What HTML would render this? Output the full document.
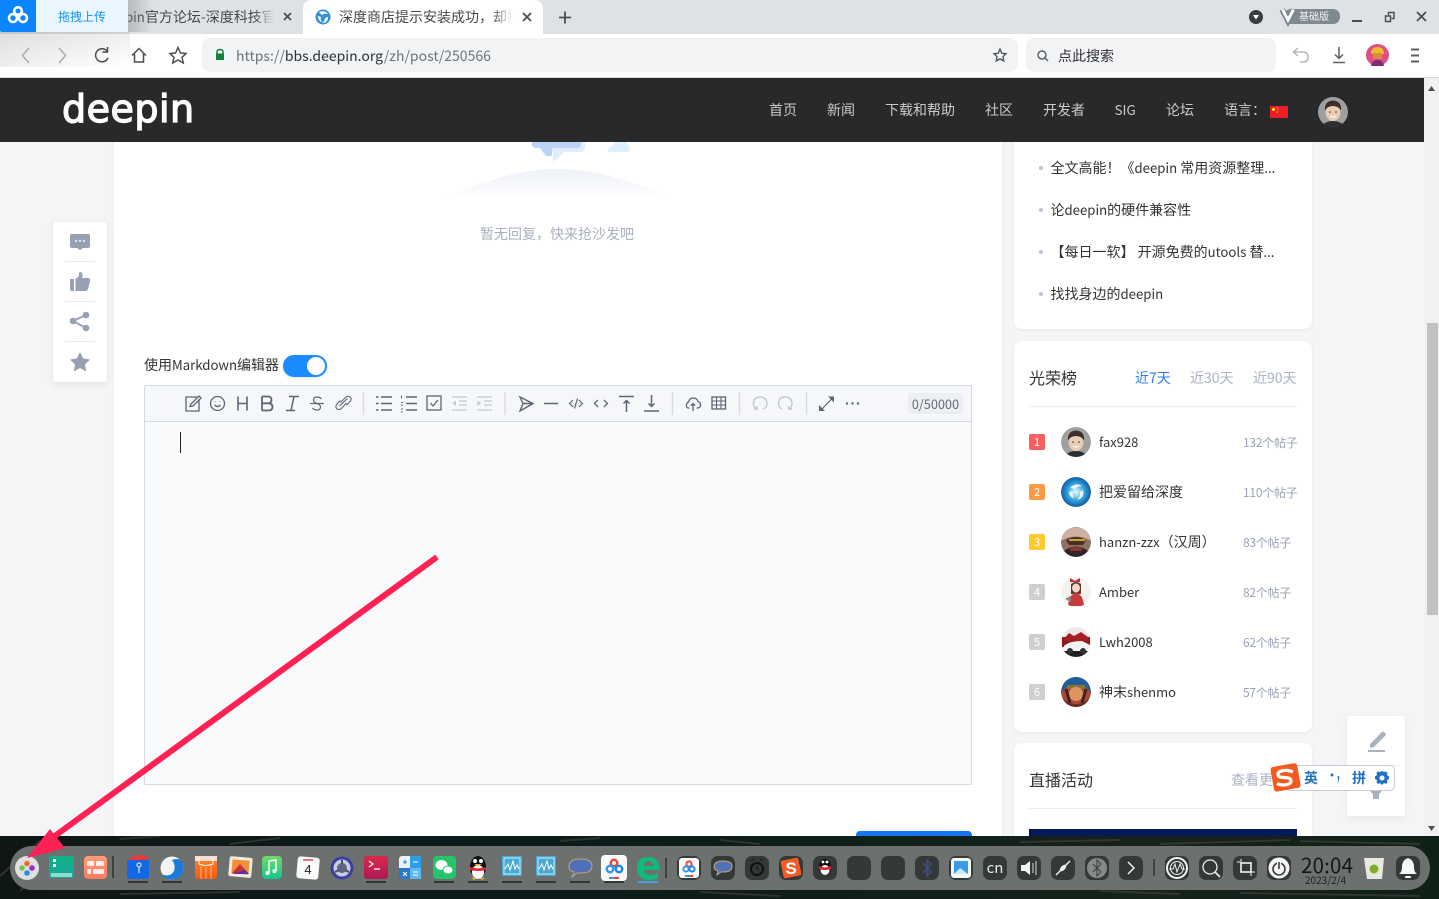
<!DOCTYPE html>
<html lang="zh"><head><meta charset="utf-8"><title>deepin</title>
<style>
*{box-sizing:border-box}
html,body{margin:0;padding:0;width:1439px;height:899px;overflow:hidden;background:#f4f5f7;font-family:"Noto Sans CJK SC","Liberation Sans",sans-serif;color:#333}
.a,.t{position:absolute}
.t{white-space:nowrap;line-height:20px;font-size:14px}
.l{font-size:13.2px}
.nav{color:#c9cacb}
.gray{color:#9aa3b4;font-size:12px;letter-spacing:-.25px}
.b{left:1029px;width:16px;height:16px;border-radius:2px;color:#fff;font-size:11px;line-height:16px;text-align:center}
.av{left:1061px;width:30px;height:30px;border-radius:50%}
.card{background:#fff;border-radius:8px;box-shadow:0 1px 4px rgba(0,0,0,.06)}
.dot{left:1039px;width:4px;height:4px;border-radius:50%;background:#bcc4d2}
</style></head><body>

<!-- page -->
<div class="a" style="left:114px;top:142px;width:888px;height:700px;background:#fff;box-shadow:0 0 3px rgba(0,0,0,.06)"></div>
<div class="a card" style="left:1014px;top:130px;width:298px;height:199px"></div>
<div class="a card" style="left:1014px;top:341px;width:298px;height:391px"></div>
<div class="a card" style="left:1014px;top:743px;width:298px;height:110px"></div>
<div class="a" style="left:1029px;top:829px;width:268px;height:8px;background:#061a5a"></div>

<!-- empty state -->
<svg class="a" style="left:440px;top:142px" width="240" height="60" viewBox="0 0 240 60">
<defs><linearGradient id="h" x1="0" y1="0" x2="0" y2="1"><stop offset="0" stop-color="#eef1f7"/><stop offset="1" stop-color="#fff"/></linearGradient></defs>
<path d="M0 57C50 36 85 27 118 27C150 27 195 38 232 57Z" fill="url(#h)"/>
<path d="M110 0H145V6Q145 10 140 10H124L113 20V10H110Z" fill="#dfeefe"/>
<path d="M92 0H141V3Q141 6 136 6H112V14H106L100 6H97Q92 6 92 3Z" fill="#bcd3f7"/>
<path d="M168 10Q167 5 172 4Q174 0 176 0H186Q190 4 190 8Q190 10 187 10Z" fill="#dff0fd"/>
</svg>
<div class="t" style="left:480px;top:224px;color:#a9b0bc">暂无回复，快来抢沙发吧</div>

<!-- left float -->
<div class="a card" style="left:53px;top:222px;width:54px;height:160px;border-radius:3px;box-shadow:0 2px 8px rgba(0,0,0,.09)"></div>
<div class="a" style="left:65px;top:261px;width:30px;height:1px;background:#eaecef"></div>
<div class="a" style="left:65px;top:301px;width:30px;height:1px;background:#eaecef"></div>
<div class="a" style="left:65px;top:341px;width:30px;height:1px;background:#eaecef"></div>
<svg class="a" style="left:53px;top:222px" width="54" height="160" viewBox="0 0 54 160" fill="#98a1b3">
<path d="M19 12Q17 12 17 14V24Q17 26 19 26H24.500L27 28.500L29.500 26H35Q37 26 37 24V14Q37 12 35 12Z"/>
<g fill="#fff"><circle cx="23" cy="19" r="1"/><circle cx="27" cy="19" r="1"/><circle cx="31" cy="19" r="1"/></g>
<path d="M17 57H21V69H19Q17 69 17 67ZM22.500 57L26 54V51Q27 49 29 51Q30 53 29 56H35Q37.500 56 37 59L35 67Q34.500 69 32 69H22.500Z"/>
<circle cx="33" cy="93" r="3.300"/><circle cx="20" cy="99" r="3.300"/><circle cx="33" cy="106" r="3.300"/>
<path d="M33 93L20 99L33 106" fill="none" stroke="#98a1b3" stroke-width="2"/>
<path d="M27 130L30.200 136.500L37 137.500L32 142.500L33.300 149.500L27 146L20.700 149.500L22 142.500L17 137.500L23.800 136.500Z"/>
</svg>

<!-- editor -->
<div class="t" style="left:144px;top:355px;color:#333">使用<span class="l">Markdown</span>编辑器</div>
<div class="a" style="left:283px;top:355px;width:44px;height:22px;border-radius:11px;background:#1a8cff;box-shadow:0 1px 3px rgba(0,0,0,.12)"></div>
<div class="a" style="left:307px;top:357px;width:18px;height:18px;border-radius:50%;background:#fff"></div>
<div class="a" style="left:144px;top:385px;width:828px;height:400px;background:#f9fafc;border:1px solid #d5d9e0;border-radius:2px"></div>
<div class="a" style="left:145px;top:386px;width:826px;height:36px;background:#f6f7fa;border-bottom:1px solid #d5d9e0"></div>
<div class="a" style="left:180px;top:432px;width:1px;height:21px;background:#222"></div>
<div class="a" style="left:908px;top:393px;width:55px;height:21px;border-radius:3px;background:#eceef1;color:#626a76;font-size:12.500px;line-height:21px;text-align:center;letter-spacing:.1px">0/50000</div>

<svg class="a" style="left:145px;top:386px" width="826" height="36" viewBox="0 0 826 36" fill="none" stroke="#5d6673" stroke-width="1.300">
<path d="M52 11H41V25H54V14M45 20.500L46 18L54 10L56 12L48 20Z"/>
<circle cx="72.500" cy="17.500" r="7"/><path d="M69.500 19Q72.500 22 75.500 19M70 15V15.500M75 15V15.500"/>
<path d="M93 10.500V24.500M102 10.500V24.500M93 17.500H102" stroke-width="1.600"/>
<path d="M117 10.500V24.500M117 10.500H123Q126.500 10.500 126.500 14Q126.500 17.300 123 17.300H117M123 17.300Q127.500 17.300 127.500 21Q127.500 24.500 123 24.500H117" stroke-width="1.800"/>
<path d="M144 10.500H154M141 24.500H150M149 10.500L146 24.500" stroke-width="1.500"/>
<path d="M165 17.500H179" stroke-width="1.200"/><path d="M176.500 13Q175 11 172 11Q168.500 11 168.500 14Q168.500 16.500 172 17.500Q175.500 18.500 175.500 21Q175.500 24 172 24Q169 24 167.500 22" stroke-width="1.200"/>
<path d="M195.500 16.500L200.500 11.500Q202.500 9.500 205 11Q207 13 205.500 15L201.500 19M201.500 17L196.500 22.500Q194.500 24.500 192 23Q190 21 191.500 18.500L195.500 14.500M194.500 20L202.500 12.500" stroke-width="1.100" transform="translate(0 0)"/>
<path d="M218.500 6V29" stroke="#d8dbe0"/>
<path d="M236 11H247M236 17.500H247M236 24H247" stroke-width="1.600"/><path d="M231 11H233.500M231 17.500H233.500M231 24H233.500" stroke-width="1.600"/>
<path d="M261 11H272M261 17.500H272M261 24H272" stroke-width="1.600"/><path d="M256.500 9.500V12.500M256 16.500H258M256 19H258M256 23H258M256 26H258" stroke-width="1"/>
<rect x="282" y="10" width="14" height="14"/><path d="M285.500 17L288 20L293 14"/>
<path d="M307 11H322M314 15H322M314 19H322M307 24H322" stroke="#c3c7ce"/><path d="M311 14.500V20L307.500 17.200Z" fill="#c3c7ce" stroke="none"/>
<path d="M332 11H347M339 15H347M339 19H347M332 24H347" stroke="#c3c7ce"/><path d="M332.500 14.500V20L336 17.200Z" fill="#c3c7ce" stroke="none"/>
<path d="M360 6V29" stroke="#d8dbe0"/>
<path d="M375 11L388 17.500L375 25L378 17.500ZM378 17.500H388" stroke-width="1.400"/>
<path d="M399 17.500H413" stroke-width="1.500"/>
<path d="M428 14L424.500 17.500L428 21M434 14L437.500 17.500L434 21M432.500 12.500L429.500 22.500" stroke-width="1.200"/>
<path d="M453 14L449.500 17.500L453 21M459 14L462.500 17.500L459 21" stroke-width="1.300"/>
<path d="M474 10.500H489M481.500 26V15M478.500 17.500L481.500 14.500L484.500 17.500" stroke-width="1.500"/>
<path d="M499 25H514M506.500 9V20M503.500 17.500L506.500 20.500L509.500 17.500" stroke-width="1.500"/>
<path d="M527.500 6V29" stroke="#d8dbe0"/>
<path d="M544.500 22H543Q541 21.500 541.500 18.500Q542 16.500 543.500 16Q544.500 12 548 12Q552 12 553 15.500Q555.500 16 555.500 18.500Q555.500 21.500 553 22H551.500M548 25V17.500M545.800 19.700L548 17.500L550.200 19.700"/>
<rect x="567" y="11" width="13.500" height="12"/><path d="M567 15H580.500M567 19H580.500M571.500 11V23M576 11V23" stroke-width="1.100"/>
<path d="M594.500 6V29" stroke="#d8dbe0"/>
<path d="M612 23Q608 21 608.500 16.500Q609.500 11 615 11Q621 11 622 16.500Q622.500 21 618.500 23M609 23H612V20" stroke="#c5c8ce" stroke-width="1.400"/>
<path d="M637 23Q633 21 633.500 16.500Q634.500 11 640 11Q646 11 647 16.500Q647.500 21 643.500 23M647 23H643.500V20" stroke="#c5c8ce" stroke-width="1.400"/>
<path d="M661.500 6V29" stroke="#d8dbe0"/>
<path d="M677 23L687 12.500" stroke-width="1.100"/><path d="M683 10.500H689V16.500ZM680 25H674V19Z" fill="#5d6673" stroke="none"/>
<g fill="#5d6673" stroke="none"><circle cx="702" cy="17.500" r="1.200"/><circle cx="707.500" cy="17.500" r="1.200"/><circle cx="713" cy="17.500" r="1.200"/></g>
</svg>

<!-- submit button edge -->
<div class="a" style="left:856px;top:831px;width:116px;height:8px;background:#1476f0;border-radius:4px 4px 0 0"></div>

<!-- right list -->
<div class="a dot" style="top:166px"></div><div class="t" style="left:1050.500px;top:158px">全文高能！《<span class="l">deepin</span> 常用资源整理<span class="l">...</span></div>
<div class="a dot" style="top:208px"></div><div class="t" style="left:1050.500px;top:200px">论<span class="l">deepin</span>的硬件兼容性</div>
<div class="a dot" style="top:250px"></div><div class="t" style="left:1050.500px;top:242px">【每日一软】 开源免费的<span class="l">utools</span> 替<span class="l">...</span></div>
<div class="a dot" style="top:292px"></div><div class="t" style="left:1050.500px;top:284px">找找身边的<span class="l">deepin</span></div>

<div class="t" style="left:1029px;top:367px;font-size:16px;line-height:21px;color:#333">光荣榜</div>
<div class="t" style="left:1135px;top:368px;color:#2b7ef0">近7天</div>
<div class="t" style="left:1190px;top:368px;color:#a9b3c4">近30天</div>
<div class="t" style="left:1253px;top:368px;color:#a9b3c4">近90天</div>
<div class="a" style="left:1029px;top:406px;width:268px;height:1px;background:#eceef1"></div>

<div class="a b" style="top:434px;background:#f85f5f">1</div>
<div class="a b" style="top:484px;background:#fb9b45">2</div>
<div class="a b" style="top:534px;background:#fdca2e">3</div>
<div class="a b" style="top:584px;background:#cfcfcf">4</div>
<div class="a b" style="top:634px;background:#cfcfcf">5</div>
<div class="a b" style="top:684px;background:#cfcfcf">6</div>

<svg class="a av" style="top:427px" width="30" height="30" viewBox="0 0 30 30"><circle cx="15" cy="15" r="15" fill="#a0a0a0"/><ellipse cx="15" cy="15" rx="7.500" ry="9" fill="#e9cdb4"/><path d="M7 14Q6 4 15 3.500Q24 4 23 14Q21 9 15 9Q9 9 7 14Z" fill="#3a2f2a"/><path d="M5 28Q8 24 15 24Q22 24 25 28Q20 30 15 30Q10 30 5 28Z" fill="#2f2f2f"/><path d="M12 19Q15 21 18 19" stroke="#fff" fill="none"/><circle cx="12" cy="15" r=".8" fill="#333"/><circle cx="18" cy="15" r=".8" fill="#333"/></svg>
<svg class="a av" style="top:477px" width="30" height="30" viewBox="0 0 30 30"><defs><radialGradient id="d"><stop offset=".1" stop-color="#cdeefa"/><stop offset=".55" stop-color="#36a6db"/><stop offset="1" stop-color="#0d5ba8"/></radialGradient></defs><circle cx="15" cy="15" r="15" fill="url(#d)"/><path d="M9 11Q15 5 21 9Q16 9 14 12ZM22 13Q24 21 16 23Q20 19 19 15ZM8 15Q8 20 13 21Q11 17 12 14Z" fill="#e9f7fc"/></svg>
<svg class="a av" style="top:527px" width="30" height="30" viewBox="0 0 30 30"><circle cx="15" cy="15" r="15" fill="#8d7263"/><path d="M0 14Q15 5 30 14V4Q15-3 0 4Z" fill="#cdb0a0"/><path d="M5 13Q15 7 25 13L22 18H8Z" fill="#4a2f26"/><path d="M8 12H24V14H8Z" fill="#c3a53a"/><path d="M3 24Q15 15 27 24Q22 30 15 30Q8 30 3 24Z" fill="#33242a"/><path d="M9 20H21V24H9Z" fill="#8a3530"/></svg>
<svg class="a av" style="top:577px" width="30" height="30" viewBox="0 0 30 30"><circle cx="15" cy="15" r="15" fill="#f4f1ee"/><path d="M9 1L14 4L19 1V5H9Z" fill="#c4313b"/><path d="M10 7Q15 3 20 7V17H10Z" fill="#5c3c30"/><ellipse cx="15" cy="11" rx="4" ry="4.500" fill="#f0d8c8"/><path d="M7 29Q8 17 15 16Q22 17 23 29Z" fill="#c23d3b"/><path d="M4 22L9 19L10 25Z" fill="#8a8c88"/></svg>
<svg class="a av" style="top:627px" width="30" height="30" viewBox="0 0 30 30"><circle cx="15" cy="15" r="15" fill="#efe8e6"/><path d="M1 10H29V20H1Z" fill="#8f1a1f"/><path d="M3 12L8 6L13 9L20 5L27 10V14H3Z" fill="#a52025"/><path d="M3 19Q8 14 21 14L29 18V24H3Z" fill="#f2f2f2"/><path d="M2 24H28Q25 30 15 30Q6 30 2 24Z" fill="#1e1e1e"/><circle cx="9" cy="24" r="3" fill="#333"/><circle cx="22" cy="24" r="3" fill="#333"/></svg>
<svg class="a av" style="top:677px" width="30" height="30" viewBox="0 0 30 30"><circle cx="15" cy="15" r="15" fill="#a84a36"/><path d="M0 15Q2 0 15 0Q28 0 30 15L24 10H6Z" fill="#1f5f99"/><path d="M6 8H24V12H6Z" fill="#8f7232"/><ellipse cx="15" cy="17" rx="7" ry="7" fill="#dd9460"/><path d="M2 22Q15 32 28 22L24 30H6Z" fill="#6b2a23"/><path d="M5 12L9 26M25 12L21 26" stroke="#43231e" stroke-width="3"/></svg>

<div class="t" style="left:1099px;top:432px;font-size:13px">fax928</div>
<div class="t" style="left:1099px;top:482px">把爱留给深度</div>
<div class="t" style="left:1099px;top:532px"><span style="font-size:13px">hanzn-zzx</span>（汉周）</div>
<div class="t" style="left:1099px;top:582px;font-size:13px">Amber</div>
<div class="t" style="left:1099px;top:632px;font-size:13px">Lwh2008</div>
<div class="t" style="left:1099px;top:682px">神末<span style="font-size:13px">shenmo</span></div>

<div class="t gray" style="left:1243px;top:433px">132个帖子</div>
<div class="t gray" style="left:1243px;top:483px">110个帖子</div>
<div class="t gray" style="left:1243px;top:533px">83个帖子</div>
<div class="t gray" style="left:1243px;top:583px">82个帖子</div>
<div class="t gray" style="left:1243px;top:633px">62个帖子</div>
<div class="t gray" style="left:1243px;top:683px">57个帖子</div>

<div class="t" style="left:1029px;top:769px;font-size:16px;line-height:21px">直播活动</div>
<div class="t" style="left:1231px;top:770px;color:#a9b3c4">查看更多</div>
<div class="a" style="left:1029px;top:808px;width:268px;height:1px;background:#eceef1"></div>

<!-- right float -->
<div class="a" style="left:1347px;top:716px;width:58px;height:100px;background:#fff;border-radius:3px;box-shadow:0 2px 8px rgba(0,0,0,.06)"></div>
<div class="a" style="left:1351px;top:765px;width:50px;height:1px;background:#eceef1"></div>
<svg class="a" style="left:1347px;top:716px" width="58" height="100" viewBox="0 0 58 100" fill="#aab2c0">
<path d="M23 28L35 16Q36 15 37 16L38.500 17.500Q39.500 18.500 38.500 19.500L26.500 31.500H23Z"/><path d="M21 34H38V36H21Z"/>
<path d="M22 74H36L32 78V83H26V78Z"/>
</svg>

<!-- scrollbar -->
<div class="a" style="left:1424px;top:78px;width:15px;height:758px;background:#f1f1f1"></div>
<div class="a" style="left:1427px;top:323px;width:11px;height:292px;background:#c1c1c1"></div>
<svg class="a" style="left:1424px;top:78px" width="15" height="758" viewBox="0 0 15 758" fill="#505050"><path d="M4 13L7.500 8L11 13Z"/><path d="M4 748H11L7.500 753Z"/></svg>

<!-- top nav -->
<div class="a" style="left:0;top:78px;width:1424px;height:64px;background:#28292b"></div>
<div class="t" style="left:62px;top:86px;font-family:'DejaVu Sans',sans-serif;font-size:38px;line-height:46px;color:#fff;letter-spacing:.5px;-webkit-text-stroke:1.300px #fff">deepin</div>
<div class="t nav" style="left:769px;top:100px">首页</div>
<div class="t nav" style="left:827px;top:100px">新闻</div>
<div class="t nav" style="left:885px;top:100px">下载和帮助</div>
<div class="t nav" style="left:985px;top:100px">社区</div>
<div class="t nav" style="left:1043px;top:100px">开发者</div>
<div class="t nav" style="left:1114.500px;top:99px;font-size:13.500px">SIG</div>
<div class="t nav" style="left:1166px;top:100px">论坛</div>
<div class="t nav" style="left:1224px;top:100px">语言：</div>
<svg class="a" style="left:1270px;top:106px" width="18" height="12" viewBox="0 0 18 12"><rect width="18" height="12" fill="#ee1c25"/><circle cx="3.500" cy="3.500" r="1.500" fill="#ff0"/><circle cx="7" cy="1.500" r=".5" fill="#ff0"/><circle cx="8" cy="3" r=".5" fill="#ff0"/><circle cx="8" cy="5" r=".5" fill="#ff0"/><circle cx="7" cy="6.500" r=".5" fill="#ff0"/></svg>
<svg class="a" style="left:1318px;top:97px" width="30" height="30" viewBox="0 0 30 30"><circle cx="15" cy="15" r="15" fill="#a0a0a0"/><ellipse cx="15" cy="15" rx="7.500" ry="9" fill="#e9cdb4"/><path d="M7 14Q6 4 15 3.500Q24 4 23 14Q21 9 15 9Q9 9 7 14Z" fill="#3a2f2a"/><path d="M5 28Q8 24 15 24Q22 24 25 28Q20 30 15 30Q10 30 5 28Z" fill="#2f2f2f"/><path d="M12 19Q15 21 18 19" stroke="#fff" fill="none"/><circle cx="12" cy="15" r=".8" fill="#333"/><circle cx="18" cy="15" r=".8" fill="#333"/></svg>

<!-- browser chrome -->
<div class="a" style="left:0;top:0;width:1439px;height:34px;background:#dee1e6"></div>
<div class="a" style="left:0;top:34px;width:1439px;height:43px;background:#fff"></div>
<div class="a" style="left:0;top:77px;width:1439px;height:1px;background:#d8d8d8"></div>
<div class="t" style="left:125px;top:7px;width:149px;overflow:hidden;color:#45494e"><span class="l">pin</span>官方论坛-深度科技官</div>
<div class="a" style="left:254px;top:4px;width:20px;height:26px;background:linear-gradient(90deg,rgba(222,225,230,0),#dee1e6)"></div>
<div class="a" style="left:303px;top:0;width:240px;height:34px;background:#fff;border-radius:8px 8px 0 0"></div>
<div class="t" style="left:339px;top:7px;width:174px;overflow:hidden;color:#45494e">深度商店提示安装成功，却找</div>
<div class="a" style="left:493px;top:4px;width:20px;height:26px;background:linear-gradient(90deg,rgba(255,255,255,0),#fff)"></div>
<div class="a" style="left:202px;top:38px;width:816px;height:34px;background:#f1f3f4;border-radius:8px"></div>
<div class="a" style="left:1026px;top:38px;width:250px;height:34px;background:#f1f3f4;border-radius:8px"></div>
<div class="t" style="left:236px;top:46px;color:#6f7378;font-size:14px"><span>https://</span><span style="color:#2e3135">bbs.deepin.org</span><span>/zh/post/250566</span></div>
<div class="t" style="left:1058px;top:46px;color:#2d2f33">点此搜索</div>

<svg class="a" style="left:0;top:0" width="1439" height="78" viewBox="0 0 1439 78" fill="none" stroke="#4a4d52" stroke-width="1.500">
<defs><linearGradient id="sh" x1="0" x2="1"><stop offset="0" stop-color="#888" stop-opacity=".45"/><stop offset="1" stop-color="#888" stop-opacity="0"/></linearGradient><linearGradient id="sh2" x1="0" y1="0" x2="1" y2="1"><stop offset="0" stop-color="#000" stop-opacity=".13"/><stop offset="1" stop-color="#000" stop-opacity="0"/></linearGradient></defs>
<rect x="128" y="0" width="26" height="32" fill="url(#sh)" stroke="none"/>
<rect x="0" y="32" width="130" height="35" fill="url(#sh2)" stroke="none"/>
<path d="M284 13L291 20M291 13L284 20" stroke-width="1.800"/>
<path d="M523 13L531 21M531 13L523 21" stroke-width="1.800"/>
<path d="M559 17.500H571M565 11.500V23.500" stroke-width="1.800"/>
<circle cx="323" cy="17" r="7.500" fill="#3792d3" stroke="none"/><path d="M319 12Q325 10 328 14Q324 13 322 15ZM328 17Q328 23 322 23Q325 21 325 18ZM318 16Q318 21 322 22Q320 19 321 17Z" fill="#fff" stroke="none"/>
<path d="M29 48L22.500 55.500L29 63" stroke="#a9acb0"/><path d="M59 48L65.500 55.500L59 63" stroke="#a9acb0"/>
<path d="M107 51A6.500 6.500 0 1 0 108 58M107.500 47V52H102.500"/>
<path d="M132 55.500L139 48.500L146 55.500M134.500 54V62H143.500V54"/>
<path d="M178 47.500L180.500 53L186 53.500L182 57.300L183.300 63L178 60L172.700 63L174 57.300L170 53.500L175.500 53Z"/>
<path d="M1000 49L1001.800 53.300L1006 53.700L1003 56.700L1003.800 61L1000 58.800L996.200 61L997 56.700L994 53.700L998.200 53.300Z" stroke-width="1.300"/>
<path d="M217 54V52Q217 49.500 220 49.500Q223 49.500 223 52V54" stroke="#13813b"/><rect x="216" y="53.500" width="8" height="6.500" fill="#13813b" stroke="none"/>
<circle cx="1042" cy="55" r="4" stroke="#5d6064"/><path d="M1045 58L1048 61" stroke="#5d6064"/>
<path d="M1298 48L1293.500 52L1298 56M1294 52H1303Q1308 52 1308 57Q1308 62 1303 62H1300" stroke="#b3b6ba"/>
<path d="M1339 47V58M1335 54.500L1339 58.500L1343 54.500M1333 62.500H1345" stroke="#5d6064"/>
<path d="M1411 49.500H1419M1411 55.500H1419M1411 61.500H1419" stroke="#5d6064" stroke-width="2"/>
<circle cx="1256" cy="17" r="7" fill="#3b3c3f" stroke="none"/><path d="M1253 15H1259L1256 19.500Z" fill="#fff" stroke="none"/>
<rect x="1284" y="9" width="56" height="15" rx="7" fill="#7e8a8f" stroke="none"/>
<path d="M1282 9.500L1288 21L1294 9.500" stroke="#76838a" stroke-width="5.500"/><path d="M1282.500 9.500L1288 20L1293.500 9.500" stroke="#fff" stroke-width="3"/>
<path d="M1352 21H1362" stroke-width="2"/>
<path d="M1385.500 16V21.500H1390.500V16ZM1388.500 15V12.500H1394V18.500H1391.500" stroke-width="1.400"/>
<path d="M1417 12L1426 21M1426 12L1417 21" stroke-width="1.800"/>
<g fill="#df4f86" stroke="none"><ellipse cx="1377.500" cy="55" rx="11.500" ry="11"/></g>
<path d="M1371 54Q1371 47 1377.500 47Q1384 47 1384 54Z" fill="#f0b82d" stroke="none"/><rect x="1373" y="53" width="9" height="6" fill="#d88d3c" stroke="none"/><path d="M1371 66Q1372 60 1377.500 60Q1383 60 1384 66Z" fill="#7c2b79" stroke="none"/>
</svg>
<div class="t" style="left:1299px;top:9px;font-size:10px;line-height:14px;color:#f1f3f4">基础版</div>

<!-- baidu upload -->
<div class="a" style="left:0;top:0;width:36px;height:32px;background:#0a84ff;border-radius:0 0 0 2px"></div>
<div class="a" style="left:36px;top:0;width:92px;height:32px;background:#e9f6ff"></div>
<div class="t" style="left:58px;top:8px;font-size:12px;line-height:17px;color:#1793f2">拖拽上传</div>
<svg class="a" style="left:5px;top:4px" width="26" height="22" viewBox="0 0 26 22" fill="none" stroke="#fff" stroke-width="2.600"><circle cx="13" cy="7" r="3.800"/><circle cx="8" cy="14" r="4"/><circle cx="18" cy="14" r="4"/></svg>

<!-- dock -->
<div class="a" style="left:0;top:836px;width:1439px;height:63px;background:linear-gradient(90deg,#0f1716 0%,#0b1a1a 30%,#111f19 62%,#15231b 80%,#0f2017 100%)"></div>
<svg class="a" style="left:0;top:836px" width="1439" height="63" viewBox="0 0 1439 63" fill="none" stroke="#3a3f38" stroke-width="2" opacity=".7"><path d="M0 40L40 5M20 55L70 10M120 3L160 0M230 8L280 2M560 5L600 2M720 4L760 8M1020 6L1120 4M1160 8L1290 4M1300 5L1420 8M1100 55L1180 58M1240 57L1420 60M700 56L780 60M120 58L240 56"/></svg>
<div class="a" style="left:10px;top:846px;width:1420px;height:44px;border-radius:22px;background:#6c706f"></div>
<div class="a" style="left:112px;top:856px;width:2px;height:22px;background:#3e4140"></div>
<div class="a" style="left:665px;top:858px;width:2px;height:20px;background:#3e4140"></div>
<div class="a" style="left:1153px;top:859px;width:2px;height:17px;background:#3e4140"></div>

<svg class="a" style="left:0;top:846px" width="1439" height="44" viewBox="0 0 1439 44">
<defs>
<linearGradient id="g1" x1="0" y1="0" x2="0" y2="1"><stop offset="0" stop-color="#0fb282"/><stop offset="1" stop-color="#17a8a0"/></linearGradient>
<linearGradient id="g2" x1="0" y1="0" x2="0" y2="1"><stop offset="0" stop-color="#ff9c78"/><stop offset="1" stop-color="#ff7a64"/></linearGradient>
<linearGradient id="g3" x1="0" y1="0" x2="0" y2="1"><stop offset="0" stop-color="#ff8838"/><stop offset="1" stop-color="#f2590d"/></linearGradient>
<linearGradient id="g4" x1="0" y1="0" x2="0" y2="1"><stop offset="0" stop-color="#6fdc64"/><stop offset="1" stop-color="#13c78d"/></linearGradient>
<linearGradient id="g5" x1="0" y1="0" x2="0" y2="1"><stop offset="0" stop-color="#d8294a"/><stop offset="1" stop-color="#ad1b55"/></linearGradient>
</defs>
<!-- launcher -->
<circle cx="27" cy="22" r="12" fill="#dfdfdf"/>
<circle cx="27" cy="17.500" r="2.800" fill="#f06a3a"/><circle cx="32" cy="22" r="2.800" fill="#9b2cc8"/><circle cx="27" cy="27" r="2.800" fill="#2c8ae8"/><circle cx="22" cy="22" r="2.800" fill="#7bc24a"/>
<!-- terminal-ish -->
<rect x="49" y="10" width="25" height="22" rx="2" fill="url(#g1)"/><path d="M51 27H72V31H51Z" fill="#8fdcc9"/><rect x="53" y="13" width="3" height="3" fill="#fff"/><rect x="53" y="18" width="3" height="3" fill="#fff"/>
<rect x="84" y="10" width="23" height="23" rx="4" fill="url(#g2)"/><rect x="87" y="15" width="7" height="5" rx="1" fill="#fff" opacity=".85"/><rect x="96" y="15" width="8" height="5" rx="1" fill="#fff" opacity=".85"/><rect x="87" y="23" width="4" height="5" rx="1" fill="#fff" opacity=".85"/><rect x="93" y="23" width="11" height="5" rx="1" fill="#fff" opacity=".85"/>
<!-- store -->
<path d="M127 14Q138 6 149 13V30Q149 33 146 33H130Q127 33 127 30Z" fill="#1468e6"/><path d="M129 13Q138 6 147 11L149 14H127Z" fill="#e63a3a"/><circle cx="139" cy="19" r="2" stroke="#fff" fill="none"/><path d="M139 21V27" stroke="#fff"/>
<!-- browser blue -->
<circle cx="172" cy="22" r="11.500" fill="#f3f3f3"/><path d="M172 14Q183 10 183.500 22Q183 33 172 33.500Q164 33 161 28Q170 32 174 25Q176 19 172 14Z" fill="#1d7bd8"/>
<!-- shop -->
<rect x="195" y="10" width="22" height="23" rx="3" fill="url(#g3)"/><path d="M195 10H217V15H195Z" fill="#f6e1cc"/><path d="M199 12V18Q206 21 213 18V12" stroke="#fff" fill="none"/><path d="M201 20V33M206 21V33M211 20V33" stroke="#ffb27f"/>
<!-- photos -->
<rect x="229" y="11" width="23" height="20" rx="2" fill="#f5ead9" transform="rotate(5 240 21)"/><rect x="232" y="14" width="17" height="14" fill="#f08f3a" transform="rotate(5 240 21)"/><path d="M232 27L240 18L249 28Z" fill="#c5323b"/><path d="M232 28L245 24L249 28Z" fill="#5b2fa8"/>
<!-- music -->
<path d="M276 10Q286 21 276 32Z" fill="#16271f"/><rect x="262" y="10" width="20" height="23" rx="4" fill="url(#g4)"/><path d="M269 27V15L276 14V25" stroke="#fff" fill="none" stroke-width="1.500"/><circle cx="267.500" cy="27" r="2" fill="#fff"/><circle cx="274.500" cy="25" r="2" fill="#fff"/>
<!-- calendar -->
<rect x="297" y="11" width="22" height="22" rx="3" fill="#fafafa" transform="rotate(5 308 22)"/><path d="M303 14H313" stroke="#e34a4a" stroke-width="1.500"/><text x="308" y="28" font-size="13" text-anchor="middle" fill="#222" font-family="Liberation Sans">4</text>
<!-- settings gear -->
<circle cx="342" cy="22" r="11.500" fill="#3a3fa0"/><circle cx="342" cy="22" r="8.500" fill="#c9cbe0"/><circle cx="342" cy="22" r="5" fill="#606480"/><path d="M342 14V18M335 26L339 24M349 26L345 24" stroke="#484c6d" stroke-width="2"/>
<!-- terminal red -->
<rect x="364" y="10" width="24" height="23" rx="3" fill="url(#g5)"/><path d="M369 15L373 18L369 21M374 23H380" stroke="#fff" fill="none" stroke-width="1.200"/>
<!-- calc -->
<rect x="399" y="10" width="22" height="23" rx="3" fill="#e8f1f9"/><rect x="410" y="10" width="11" height="12" fill="#2d9fe8"/><rect x="399" y="22" width="11" height="11" fill="#2778c8"/><rect x="410" y="22" width="11" height="11" fill="#5fb8ee"/><path d="M413 16H418M403 26L407 30M407 26L403 30M413 26H418M413 29H418" stroke="#fff"/><path d="M403 16H407M405 14V18" stroke="#2479d0"/>
<!-- wechat -->
<rect x="433" y="10" width="23" height="23" rx="4" fill="#25c56a"/><ellipse cx="441.500" cy="19" rx="6" ry="5" fill="#fff"/><ellipse cx="448" cy="24" rx="5" ry="4" fill="#fff" stroke="#25c56a"/>
<!-- qq -->
<g id="qq"><ellipse cx="478" cy="21" rx="8" ry="11" fill="#111"/><ellipse cx="478" cy="26" rx="6" ry="7" fill="#fafafa"/><circle cx="475" cy="15" r="2" fill="#fff"/><circle cx="481" cy="15" r="2" fill="#fff"/><path d="M474 18H482L478 20Z" fill="#f2b01d"/><path d="M470 21Q478 24 486 21V24Q478 26 470 24Z" fill="#e8212b"/><path d="M471 32H477L474 34ZM479 32H485L482 34Z" fill="#f2b01d"/></g>
<!-- monitors -->
<rect x="502" y="10" width="20" height="20" fill="#47aad4"/><rect x="504" y="12" width="16" height="16" fill="none" stroke="#d6eef8"/><path d="M505 23L508 18L510 24L513 15L515 23L517 19L519 23" stroke="#fff" fill="none"/>
<rect x="536" y="10" width="20" height="20" fill="#47aad4"/><rect x="538" y="12" width="16" height="16" fill="none" stroke="#d6eef8"/><path d="M539 23L542 18L544 24L547 15L549 23L551 19L553 23" stroke="#fff" fill="none"/>
<!-- chat -->
<path d="M569 21Q569 13 580 13Q592 13 592 20Q592 27 581 27H577L572 31L574 26Q569 25 569 21Z" fill="#4f70b8" stroke="#bfa776"/>
<!-- baidu -->
<rect x="601" y="9" width="26" height="26" rx="4" fill="#fafafa"/>
<g fill="none" stroke-width="2.500"><circle cx="614" cy="17" r="3.200" stroke="#e8473a"/><circle cx="610" cy="23" r="3.200" stroke="#2f9af0"/><circle cx="619" cy="23" r="3.200" stroke="#1b87e6"/></g><rect x="609" y="31" width="5" height="2" fill="#2f9af0"/><rect x="614" y="31" width="5" height="2" fill="#e8473a"/>
<!-- edge -->
<path d="M637 22Q637 11 648 11Q659 11 660 24H644Q645 29 650 29Q655 29 658 26V32Q654 34 648 34Q637 33 637 22ZM644 20H654Q652 15 648 15Q645 15 644 20Z" fill="#12b87c"/>
<!-- tray -->
<g fill="#343837">
<rect x="677" y="10" width="24" height="24" rx="7"/><rect x="711" y="10" width="24" height="24" rx="7"/><rect x="745" y="10" width="24" height="24" rx="7"/><rect x="779" y="10" width="24" height="24" rx="7"/><rect x="813" y="10" width="24" height="24" rx="7"/><rect x="847" y="10" width="24" height="24" rx="7"/><rect x="881" y="10" width="24" height="24" rx="7"/><rect x="915" y="10" width="24" height="24" rx="7"/><rect x="949" y="10" width="24" height="24" rx="7"/><rect x="983" y="10" width="24" height="24" rx="7"/><rect x="1017" y="10" width="24" height="24" rx="7"/><rect x="1051" y="10" width="24" height="24" rx="7"/><rect x="1085" y="10" width="24" height="24" rx="7"/><rect x="1119" y="10" width="24" height="24" rx="7"/><rect x="1165" y="10" width="24" height="24" rx="7"/><rect x="1199" y="10" width="24" height="24" rx="7"/><rect x="1233" y="10" width="24" height="24" rx="7"/><rect x="1267" y="10" width="24" height="24" rx="7"/>
</g>
<rect x="679" y="12" width="20" height="20" rx="3" fill="#fafafa"/>
<g fill="none" stroke-width="2"><circle cx="689" cy="18" r="2.600" stroke="#e8473a"/><circle cx="686" cy="23" r="2.600" stroke="#2f9af0"/><circle cx="692" cy="23" r="2.600" stroke="#1b87e6"/></g><rect x="685" y="29" width="4" height="2" fill="#2f9af0"/><rect x="689" y="29" width="4" height="2" fill="#e8473a"/>
<path d="M714 21Q714 15 723 15Q732 15 732 20Q732 26 724 26H721L717 29L718 25Q714 24 714 21Z" fill="#5372b6" stroke="#bfa776"/>
<circle cx="757" cy="23" r="6" fill="none" stroke="#111" stroke-width="2"/><path d="M751 15L754 13M763 15L760 13M757 20V23H759" stroke="#111" fill="none"/>
<rect x="782" y="13" width="18" height="18" rx="2" fill="#f45c24" transform="rotate(-12 791 22)"/><text x="791" y="28" font-size="17" font-weight="700" text-anchor="middle" fill="#fff" font-family="Liberation Sans">S</text>
<ellipse cx="825" cy="21" rx="6" ry="8" fill="#111"/><ellipse cx="825" cy="24" rx="4.500" ry="5" fill="#fafafa"/><path d="M819 20Q825 23 831 20V23Q825 25 819 23Z" fill="#e8212b"/><circle cx="823" cy="16" r="1.400" fill="#fff"/><circle cx="827" cy="16" r="1.400" fill="#fff"/>
<path d="M923 17L931 26L927 30V14L931 18L923 27" fill="none" stroke="#3d4f7e" stroke-width="1.500"/>
<rect x="951" y="12" width="20" height="20" rx="3" fill="#f4f8fb"/><rect x="954" y="15" width="14" height="13" fill="#3a9ce8"/><path d="M954 28L960 22L968 28Z" fill="#cfe8fa"/>
<text x="995" y="27" font-size="15" text-anchor="middle" fill="#e9e9e9" font-family="Noto Sans CJK SC">cn</text>
<path d="M1021 19H1025L1030 15V29L1025 25H1021Z" fill="#f3f3f3"/><path d="M1033 17V27M1036 15V29" stroke="#d8d8d8"/>
<path d="M1056 29L1070 15" stroke="#f0f0f0" stroke-width="1.500"/><ellipse cx="1063" cy="22" rx="4" ry="2.200" fill="#f0f0f0" transform="rotate(-45 1063 22)"/>
<ellipse cx="1097" cy="22" rx="10" ry="10" fill="#878a89"/><path d="M1093 18L1101 26L1097 30V14L1101 18L1093 26" fill="none" stroke="#3b3f3e"/>
<path d="M1128 16L1134 22L1128 28" fill="none" stroke="#eee" stroke-width="1.500"/>
<circle cx="1177" cy="22" r="10" fill="none" stroke="#f2f2f2" stroke-width="2"/><circle cx="1177" cy="22" r="6.500" fill="none" stroke="#f2f2f2"/><path d="M1169 23H1173L1175 18L1177 26L1180 18L1182 23H1185" stroke="#f2f2f2" fill="none"/>
<circle cx="1210" cy="21" r="7" fill="none" stroke="#f0f0f0" stroke-width="1.300"/><path d="M1215 26L1220 31" stroke="#f0f0f0" stroke-width="1.600"/>
<path d="M1237 16H1240M1251 16V30M1241 13V26H1255" fill="none" stroke="#f3f3f3" stroke-width="1"/><rect x="1241" y="17" width="10" height="9" fill="none" stroke="#f3f3f3" stroke-width="1.600"/>
<circle cx="1279" cy="22" r="10.500" fill="#f5f5f5"/><circle cx="1279" cy="23" r="6" fill="none" stroke="#3a3d3c" stroke-width="1.600"/><path d="M1279 15V23" stroke="#f5f5f5" stroke-width="4"/><path d="M1279 16V23" stroke="#3a3d3c" stroke-width="1.600"/>
<path d="M1364 12H1384L1382 33H1367Z" fill="#e8e8de"/><circle cx="1374" cy="23" r="4.500" fill="#7caf2a"/>
<rect x="1396" y="10" width="24" height="24" rx="7" fill="#343837"/>
<path d="M1408 12Q1402 14 1402 21Q1402 26 1399 28H1417Q1414 26 1414 21Q1414 14 1408 12Z" fill="#f7f7f7"/><rect x="1405" y="30" width="6" height="2" rx="1" fill="#f7f7f7"/>
<!-- indicators -->
<g fill="#323635"><rect x="128" y="35" width="20" height="2"/><rect x="162" y="35" width="20" height="2"/><rect x="366" y="35" width="20" height="2"/><rect x="434" y="35" width="20" height="2"/><rect x="468" y="35" width="20" height="2"/><rect x="502" y="35" width="20" height="2"/><rect x="536" y="35" width="20" height="2"/><rect x="570" y="35" width="20" height="2"/><rect x="604" y="35" width="20" height="2"/></g>
<rect x="638" y="35" width="20" height="2" fill="#45a4d8"/>
</svg>
<div class="t" style="left:1301px;top:852px;font-size:20.500px;line-height:24px;color:#151616;letter-spacing:.2px">20:04</div>
<div class="t" style="left:1305px;top:874px;font-size:10px;line-height:12px;color:#1d1f1f">2023/2/4</div>

<!-- sogou ime -->
<div class="a" style="left:1285px;top:765px;width:110px;height:26px;background:#fff;border:1px solid #c9cdd3;border-radius:5px"></div>
<svg class="a" style="left:1270px;top:763px" width="32" height="30" viewBox="0 0 32 30"><rect x="2" y="2" width="27" height="25" rx="3" fill="#f25a1f" transform="rotate(-10 15 14)"/><path d="M23 9Q19 7 14 7.500Q8 8 8 11.500Q8 14.500 14 14.500Q21 14.500 21 18Q21 21.500 14 22Q10 22 7 20.500" fill="none" stroke="#fff" stroke-width="3.200"/></svg>
<div class="t" style="left:1304px;top:769px;font-weight:700;color:#2073c4;line-height:18px">英</div>
<div class="t" style="left:1352px;top:769px;font-weight:700;color:#2073c4;line-height:18px">拼</div>
<svg class="a" style="left:1330px;top:771px" width="60" height="16" viewBox="0 0 60 16" fill="#2073c4"><circle cx="2" cy="4" r="1.500"/><path d="M9 5Q10 10 7 12Q9 9 7.500 6Q8 4.500 9 5Z"/><path d="M52 0L54 1L56 .500L57.500 2L57 4L59 5.500V8L57 9L57.500 11L56 13L54 12L52 14L50 12L48 13L46.500 11L47 9L45 8V5.500L47 4L46.500 2L48 .500L50 1Z" fill="#2073c4"/><circle cx="52" cy="7" r="2.500" fill="#fff"/></svg>

<!-- red arrow -->
<svg class="a" style="left:0;top:0;pointer-events:none" width="1439" height="899" viewBox="0 0 1439 899">
<path d="M437 557L52 838" stroke="#ff2153" stroke-width="6" fill="none"/>
<path d="M27 858L50 829L65 848Z" fill="#ff2153"/>
</svg>
</body></html>
